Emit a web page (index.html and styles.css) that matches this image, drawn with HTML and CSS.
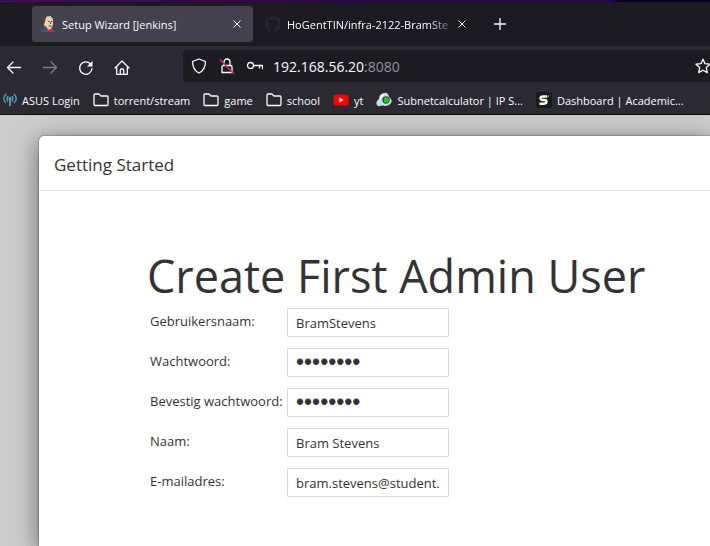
FILE: index.html
```html
<!DOCTYPE html>
<html lang="nl">
<head>
<meta charset="utf-8">
<title>Setup Wizard [Jenkins]</title>
<link rel="stylesheet" href="styles.css">
</head>
<body>
<header class="browser">
  <div class="tabs">
    <div class="tab active">
      <svg class="ico" viewBox="0 0 16 16"><path d="M1 16l1-2.500 3-1h6l3 1 1 2.500z" fill="#2e6173"/><path d="M4 3l2.500-2.500 4-.5L13 3v6l-2 4-3 1-3-2.500L3.500 8z" fill="#ecd0b4"/><path d="M3 8V4l2-3 2-1L5.500 3 5 6 4 9zM7 14L3.500 9.500l2 .5L8 13z" fill="#574c43"/><path d="M8 5.500h1.500M11 5.500h1.500M10.500 6v2M8.500 10h3" stroke="#5d473c" fill="none"/><path d="M7 13l2.500 1 3-1v3l-3-1-2.500 1z" fill="#d92d2f"/></svg>
      <span class="tab-title">Setup Wizard [Jenkins]</span>
      <button class="close" aria-label="Close tab"><svg viewBox="0 0 8 8"><path d="M.5.5l7 7M7.500.5l-7 7"/></svg></button>
    </div>
    <div class="tab">
      <svg class="ico" viewBox="0 0 16 16"><path fill="#24292e" d="M8 0C3.580 0 0 3.580 0 8c0 3.540 2.290 6.530 5.470 7.590.4.070.55-.17.55-.38v-1.490c-2.010.37-2.530-.49-2.690-.94-.09-.23-.48-.94-.82-1.130-.28-.15-.68-.52-.01-.53.63-.01 1.080.58 1.230.82.72 1.210 1.870.87 2.330.66.070-.52.28-.87.51-1.070-1.780-.2-3.640-.89-3.640-3.950 0-.87.31-1.590.82-2.150-.08-.2-.36-1.020.08-2.120 0 0 .67-.21 2.200.82a7.600 7.600 0 0 1 4 0c1.530-1.040 2.200-.82 2.200-.82.44 1.100.16 1.920.08 2.120.51.56.82 1.270.82 2.150 0 3.070-1.870 3.750-3.650 3.950.29.25.54.73.54 1.480v2.200c0 .21.15.46.55.38A8 8 0 0 0 16 8c0-4.420-3.580-8-8-8z"/></svg>
      <span class="tab-title faded">HoGentTIN/infra-2122-BramSte</span>
      <button class="close" aria-label="Close tab"><svg viewBox="0 0 8 8"><path d="M.5.5l7 7M7.500.5l-7 7"/></svg></button>
    </div>
    <button class="new-tab" aria-label="New tab"><svg viewBox="0 0 12 12"><path d="M6 0v12M0 6h12"/></svg></button>
  </div>

  <nav class="toolbar">
    <div class="nav-buttons">
      <button aria-label="Back"><svg class="line" viewBox="0 0 16 16"><path d="M14.500 7.500H1.500M7 2L1.500 7.500 7 13"/></svg></button>
      <button aria-label="Forward" disabled><svg class="line" viewBox="0 0 16 16"><path d="M1.500 7.500h13M9 2l5.500 5.500L9 13"/></svg></button>
      <button aria-label="Reload"><svg class="line" viewBox="0 0 16 16"><path d="M14 8.500A6.200 6.200 0 1 1 12.500 4"/><path d="M14.500 1v5.500H9z" fill="#fbfbfe" stroke="none"/></svg></button>
      <button aria-label="Home"><svg class="line" viewBox="0 0 16 16"><path d="M1 8L8 1l7 7M2.700 7v7.300h10.600V7M6.300 14v-4q0-1 1-1h1.400q1 0 1 1v4"/></svg></button>
    </div>
    <div class="url-bar">
      <svg class="line" viewBox="0 0 16 16"><path d="M8 1L1.500 3.500c0 5 1.500 9 6.500 11.500 5-2.500 6.500-6.500 6.500-11.500z"/></svg>
      <svg class="line" viewBox="0 0 16 16"><path d="M5 7.500V4a3 3 0 0 1 6 0v3.500M3 14.500v-5.500q0-1.500 1.500-1.500h7q1.500 0 1.500 1.500v5.500z"/><path d="M1.500 2l13 13.500" stroke="#e22850" stroke-width="1.500"/></svg>
      <svg class="line" viewBox="0 0 16 16"><circle cx="3.500" cy="7.500" r="3"/><path d="M6.500 7.500h9v3M12.500 7.500v2.500"/></svg>
      <span class="url">192.168.56.20<span class="port">:8080</span></span>
      <button class="star" aria-label="Bookmark this page"><svg class="line" viewBox="0 0 16 16"><path d="M8 1.200l2 4.500 5 .5-3.700 3.400 1 5L8 12.200l-4.300 2.400 1-5L1 6.200l5-.5z"/></svg></button>
    </div>
  </nav>

  <nav class="bookmarks">
    <a href="#"><svg class="ico small" viewBox="0 0 14 16"><g fill="none" stroke="#4ba6cf" stroke-width="1.300"><path d="M3 2Q-1.500 7 3 11M11 2q4.500 5 0 9M5 4Q3 7 5 9.500M9 4q2 3 0 5.500"/></g><circle cx="7" cy="6.500" r="1.500" fill="#4ba6cf"/><path d="M7 7v7" stroke="#9aa5aa" stroke-width="1.500"/></svg>ASUS Login</a>
    <a href="#"><svg class="ico line" viewBox="0 0 16 16"><path d="M1 12.500V3q0-1 1-1h4l2 2h6q1 0 1 1v7.500q0 1-1 1H2q-1 0-1-1z"/></svg>torrent/stream</a>
    <a href="#"><svg class="ico line" viewBox="0 0 16 16"><path d="M1 12.500V3q0-1 1-1h4l2 2h6q1 0 1 1v7.500q0 1-1 1H2q-1 0-1-1z"/></svg>game</a>
    <a href="#"><svg class="ico line" viewBox="0 0 16 16"><path d="M1 12.500V3q0-1 1-1h4l2 2h6q1 0 1 1v7.500q0 1-1 1H2q-1 0-1-1z"/></svg>school</a>
    <a href="#"><svg class="ico" viewBox="0 0 16 16"><rect x=".5" y="2.500" width="15" height="11" rx="2.500" fill="#f00"/><path d="M6.500 5.500v5l4-2.500z" fill="#fff"/></svg>yt</a>
    <a href="#"><svg class="ico" viewBox="0 0 16 16"><path d="M1 13Q-1 10 3 7q0-5 5-6 4-1 5 4 4 3 2 6-2 3-5 3-4-1-6 0-2 1-3-1z" fill="#c8dced"/><path d="M4 8q0-4 4-5" stroke="#fff" stroke-width="1.500" fill="none"/><circle cx="10" cy="8" r="3.700" fill="#245b33"/><path d="M8 6l3-1 2 3-2 3-3-1z" fill="#20c827"/></svg>Subnetcalculator | IP S...</a>
    <a href="#"><svg class="ico" viewBox="0 0 16 16"><rect width="16" height="16" rx="1" fill="#191c1a"/><path d="M11 4.500H7Q4.500 4.500 4.500 6.300T7 8h1.500q2 0 2 1.800T8 11.700H3.500" fill="none" stroke="#fff" stroke-width="2.400"/><path d="M10.500 5l3-2.500-1 3z" fill="#7cb342"/></svg>Dashboard | Academic...</a>
  </nav>
</header>

<main class="page">
  <section class="dialog">
    <div class="dialog-head"><h4>Getting Started</h4></div>
    <form class="dialog-body">
      <h1>Create First Admin User</h1>
      <div class="fields">
        <label for="user">Gebruikersnaam:</label><input id="user" type="text" value="BramStevens">
        <label for="pass">Wachtwoord:</label><input id="pass" type="password" value="password">
        <label for="pass2">Bevestig wachtwoord:</label><input id="pass2" type="password" value="password">
        <label for="name">Naam:</label><input id="name" type="text" value="Bram Stevens">
        <label for="mail">E-mailadres:</label><input id="mail" type="text" value="bram.stevens@student.">
      </div>
    </form>
  </section>
</main>
</body>
</html>
```
FILE: styles.css
```css
* { box-sizing: border-box; }
body {
  margin: 0;
  min-height: 100vh;
  display: flex;
  flex-direction: column;
  overflow: hidden;
  font-family: "Open Sans", "Noto Sans", sans-serif;
  color: #333;
}
button { border: 0; padding: 0; background: none; display: grid; place-items: center; }
svg { display: block; flex: none; }
.line, .close svg, .new-tab svg { fill: none; stroke: #fbfbfe; stroke-width: 1.3; }
.line { width: 16px; height: 16px; stroke-linecap: round; stroke-linejoin: round; }
.ico { width: 16px; height: 16px; }

.browser { background: #2b2a33; color: #fbfbfe; font-size: 11px; border-bottom: 1px solid #0c0c0d; }
.tabs {
  display: flex;
  height: 46px;
  padding: 4px 0 4px 32px;
  background: #1c1b22;
  border-style: solid;
  border-width: 2px 0 0;
  border-image: linear-gradient(90deg, #4d0075, #2f0058 50%, #250062 86%, #080027 87%) 1;
}
.tab { display: flex; align-items: center; width: 221px; height: 36px; padding: 0 12px 0 8px; border-radius: 4px; }
.tab + .tab { margin-left: 4px; }
.active { background: #42414d; }
.tab-title { flex: 1; min-width: 0; margin-left: 6px; white-space: nowrap; }
.faded { mask-image: linear-gradient(90deg, #000 82%, transparent); }
.close svg { width: 8px; height: 8px; stroke-width: 1; }
.close { width: 8px; height: 16px; }
.new-tab { width: 36px; height: 36px; margin-left: 4px; }
.new-tab svg { width: 12px; height: 12px; }

.toolbar { display: flex; height: 40px; padding-top: 4px; }
.nav-buttons { display: flex; gap: 20px; align-items: center; padding: 0 53px 0 6px; }
.nav-buttons button:disabled { opacity: .4; }
.url-bar { flex: 1; display: flex; align-items: center; gap: 12px; height: 32px; padding-left: 8px; background: #1c1b22; border-radius: 4px 0 0 4px; overflow: hidden; }
.url { font-size: 14px; margin-left: -2px; flex: 1; }
.port { color: #8f8f9a; }
.star { margin-right: -1px; }

.bookmarks { display: flex; gap: 13px; align-items: center; height: 28px; padding-left: 3px; white-space: nowrap; overflow: hidden; }
.bookmarks a { display: flex; align-items: center; gap: 5px; color: inherit; text-decoration: none; }
.small { width: 14px; }

.page { flex: 1; display: flex; background: #ccc; padding: 21px 0 0 39px; }
.dialog { flex: 1; background: #fff; border-radius: 5px 0 0; box-shadow: 0 5px 25px rgba(0, 0, 0, .5), 0 0 2px rgba(0, 0, 0, .6); }
.dialog-head { height: 55px; padding: 3px 15px 0; display: flex; align-items: center; border-bottom: 1px solid #e3e3e3; }
h4 { margin: 0; font-size: 17px; font-weight: 400; line-height: 24px; }
.dialog-body { padding: 57px 0 0 108px; }
h1 { margin: 0; font-size: 45px; font-weight: 400; line-height: 56px; white-space: nowrap; }
.fields { display: grid; grid-template-columns: 134px 162px; column-gap: 3px; row-gap: 11px; padding: 4px 0 0 3px; }
.fields label { font-size: 13px; line-height: 26px; white-space: nowrap; }
.fields input { width: 100%; height: 29px; padding: 0 8px; border: 1px solid #d9d9d9; border-radius: 1px; outline: 0; background: #fff; color: #333; font: 13px "Open Sans", "Noto Sans", sans-serif; }
.fields input[type="password"] { font: 23px "Liberation Sans", sans-serif; }
```
